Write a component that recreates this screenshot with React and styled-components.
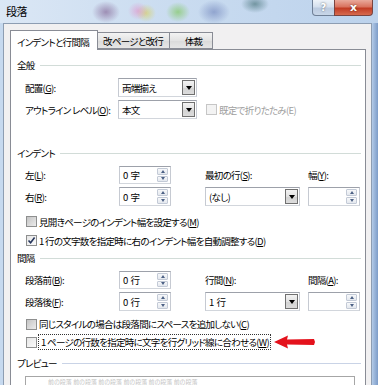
import React from 'react';
import styled, { createGlobalStyle } from 'styled-components';

const FONT = `"Noto Sans CJK JP", "Noto Sans", sans-serif`;

const Global = createGlobalStyle`
  html, body { margin: 0; padding: 0; }
  body { width: 378px; height: 385px; overflow: hidden; background: #c2d6ee; }
`;

const Window = styled.div`
  width: 378px;
  height: 385px;
  overflow: hidden;
  display: flex;
  flex-direction: column;
  background: linear-gradient(to right, #c6d9ef 0, #c6d9ef 371px, #a9c2e2 373px, #7d9cc8 378px);
  font-family: ${FONT};
  font-size: 9.5px;
  letter-spacing: -0.7px;
  font-feature-settings: "palt";
  color: #000;
`;

const TitleBar = styled.div`
  height: 23px;
  flex: none;
  display: flex;
  justify-content: space-between;
  align-items: flex-start;
  padding-left: 6px;
  box-sizing: border-box;
  background:
    radial-gradient(ellipse 14px 11px at 106px 12px, rgba(140,115,160,0.75), transparent),
    radial-gradient(ellipse 10px 9px at 138px 11px, rgba(225,150,205,0.65), transparent),
    radial-gradient(ellipse 10px 9px at 146px 13px, rgba(215,210,110,0.75), transparent),
    radial-gradient(ellipse 12px 10px at 178px 12px, rgba(130,200,100,0.7), transparent),
    radial-gradient(ellipse 16px 12px at 214px 12px, rgba(100,120,180,0.55), transparent),
    radial-gradient(ellipse 14px 9px at 255px 4px, rgba(60,105,110,0.6), transparent),
    linear-gradient(to right, #dbe7f5, #cadcf0 45%, #bcd2ec);
`;

const Title = styled.span`
  font-size: 11px;
  letter-spacing: -0.5px;
  line-height: 23px;
`;

const Captions = styled.div`
  display: flex;
  margin-right: 5px;
`;

const CapBtn = styled.div`
  width: ${p => p.$w}px;
  height: 16px;
  box-sizing: border-box;
  border: 1px solid ${p => (p.$close ? '#7a4440' : '#6f7f96')};
  border-top: none;
  border-radius: ${p => (p.$close ? '0 0 4px 0' : '0 0 0 4px')};
  margin-left: ${p => (p.$close ? '-1px' : '0')};
  display: flex;
  align-items: center;
  justify-content: center;
  font-family: "DejaVu Sans", sans-serif;
  font-weight: bold;
  letter-spacing: 0;
  font-size: ${p => (p.$close ? '11px' : '10px')};
  color: #fff;
  text-shadow: 0 0 2px rgba(0, 0, 0, 0.6);
  background: ${p =>
    p.$close
      ? 'linear-gradient(#e9a99b 0%, #d9735f 45%, #c23c24 55%, #d66a4f 100%)'
      : 'linear-gradient(#eef3f9 0%, #d5e0ee 45%, #bccbe0 55%, #c8d6e8 100%)'};
`;

const Client = styled.div`
  flex: 1;
  margin: 0 6px 0 3px;
  border: 1px solid #8d9db2;
  border-bottom: none;
  background: #f1f0f1;
  padding: 6px 0 0 6px;
  display: flex;
  flex-direction: column;
  min-height: 0;
`;

const Tabs = styled.div`
  display: flex;
  align-items: flex-end;
  height: 19px;
  flex: none;
`;

const Tab = styled.div`
  width: ${p => p.$w}px;
  box-sizing: border-box;
  height: ${p => (p.$active ? 20 : 17)}px;
  margin-bottom: ${p => (p.$active ? '-1px' : '0')};
  margin-left: ${p => (p.$first ? '0' : '-1px')};
  position: relative;
  z-index: ${p => (p.$active ? 2 : 1)};
  border: 1px solid #898c95;
  border-bottom: ${p => (p.$active ? 'none' : '1px solid #898c95')};
  background: ${p => (p.$active ? '#fff' : 'linear-gradient(#f3f3f3, #e3e3e3 50%, #dadada 51%, #e6e6e6)')};
  display: flex;
  align-items: center;
  justify-content: ${p => (p.$center ? 'center' : 'flex-start')};
  padding: ${p => (p.$active ? '2px 0 0 6px' : '1px 0 0 5px')};
  white-space: nowrap;
`;

const Panel = styled.div`
  width: 356px;
  box-sizing: border-box;
  flex: 1;
  background: #fff;
  border: 1px solid #898c95;
  padding: 9px 4px 0 6px;
  display: flex;
  flex-direction: column;
`;

const GroupHead = styled.div`
  display: flex;
  align-items: center;
  gap: 5px;
  height: 12px;
  margin-top: ${p => p.$mt || 0}px;
  white-space: nowrap;
`;

const GroupLine = styled.div`
  flex: 1;
  height: 1px;
  background: ${p => (p.$light ? '#c9d3e6' : '#d2dcd8')};
`;

const FieldGrid = styled.div`
  display: grid;
  grid-template-columns: ${p => p.$cols};
  grid-template-rows: ${p => p.$rows};
  row-gap: 3px;
  align-items: center;
  padding-left: 8px;
  margin-top: ${p => p.$mt || 0}px;
`;

const Label = styled.span`
  white-space: nowrap;
  color: ${p => (p.$disabled ? '#a0a0a0' : '#000')};
`;

const U = styled.span`
  text-decoration: underline;
`;

const Field = styled.div`
  width: ${p => p.$w}px;
  height: 100%;
  box-sizing: border-box;
  border: 1px solid #a3a7b0;
  border-color: #9da1aa #c6cad2 #d2d6dc #c6cad2;
  background: #fff;
  display: flex;
  align-items: stretch;
`;

const FieldText = styled.span`
  flex: 1;
  display: flex;
  align-items: center;
  padding-left: 3px;
  white-space: pre;
`;

const SpinCol = styled.div`
  width: 11px;
  margin: 1px 2px 1px 0;
  display: flex;
  flex-direction: column;
  gap: 1px;
`;

const SpinBtn = styled.div`
  flex: 1;
  border: 1px solid #c3cad6;
  border-radius: 1px;
  background: linear-gradient(#f7f8fa, #e4e8ee);
  display: flex;
  align-items: center;
  justify-content: center;
`;

const Tri = styled.span`
  width: 0;
  height: 0;
  border-left: ${p => p.$s}px solid transparent;
  border-right: ${p => p.$s}px solid transparent;
  ${p => (p.$up ? 'border-bottom' : 'border-top')}: ${p => p.$h}px solid ${p => p.$c};
`;

const DropBtn = styled.div`
  width: 13px;
  margin: 1px;
  box-sizing: border-box;
  border: 1px solid #707070;
  background: linear-gradient(#f3f3f3, #e2e2e2 50%, #d2d2d2 51%, #dcdcdc);
  display: flex;
  align-items: center;
  justify-content: center;
`;

const CheckRow = styled.div`
  display: flex;
  align-items: center;
  height: ${p => p.$h || 19}px;
  padding-left: ${p => (p.$inline ? 0 : 9)}px;
  margin-left: ${p => p.$ml || 0}px;
  margin-top: ${p => p.$mt || 0}px;
  white-space: nowrap;
`;

const Box = styled.span`
  width: 11px;
  height: 11px;
  box-sizing: border-box;
  flex: none;
  margin-right: 2px;
  border: 1px solid ${p => (p.$disabled ? '#c6c6c6' : '#8e8f8f')};
  background: ${p =>
    p.$disabled
      ? '#f3f3f3'
      : p.$light
      ? 'linear-gradient(135deg, #e6e6e6, #fbfbfb)'
      : 'linear-gradient(135deg, #c4c4c4, #ececec)'};
  display: flex;
  align-items: center;
  justify-content: center;
`;

const Focus = styled.span`
  outline: 1px dotted #333;
  outline-offset: 0;
  padding: 1px 1px 1px 2px;
  line-height: 12px;
`;

const Arrow = styled.svg`
  margin-left: 4px;
  flex: none;
`;

const Preview = styled.div`
  margin: 7px 6px 0 8px;
  flex: 1;
  border: 1px solid #a6a6a6;
  border-bottom: none;
  padding: 1px 0 0 22px;
  font-size: 6px;
  letter-spacing: 0;
  line-height: 7px;
  color: #c4c4c4;
  white-space: nowrap;
  overflow: hidden;
`;

const Spin = ({ value }) => (
  <Field $w={52}>
    <FieldText>{value}</FieldText>
    <SpinCol>
      <SpinBtn><Tri $up $s={2.5} $h={3} $c="#4d6185" /></SpinBtn>
      <SpinBtn><Tri $s={2.5} $h={3} $c="#4d6185" /></SpinBtn>
    </SpinCol>
  </Field>
);

const Select = ({ value, w }) => (
  <Field $w={w}>
    <FieldText>{value}</FieldText>
    <DropBtn><Tri $s={3} $h={4} $c="#000" /></DropBtn>
  </Field>
);

const Check = ({ checked, disabled, light }) => (
  <Box $disabled={disabled} $light={light}>
    {checked && (
      <svg width="9" height="9" viewBox="0 0 9 9">
        <path d="M1.5 4.5 L3.6 6.8 L7.6 1.6" fill="none" stroke="#26365c" strokeWidth="1.6" />
      </svg>
    )}
  </Box>
);

export default function App() {
  return (
    <>
      <Global />
      <Window>
        <TitleBar>
          <Title>段落</Title>
          <Captions>
            <CapBtn $w={23}>?</CapBtn>
            <CapBtn $w={39} $close>x</CapBtn>
          </Captions>
        </TitleBar>
        <Client>
          <Tabs>
            <Tab $active $first $w={88}>インデントと行間隔</Tab>
            <Tab $w={73}>改ページと改行</Tab>
            <Tab $w={44} $center>体裁</Tab>
          </Tabs>
          <Panel>
            <GroupHead>
              <Label>全般</Label>
              <GroupLine />
            </GroupHead>
            <FieldGrid $cols="93px 79px auto" $rows="19px 19px" $mt={7}>
              <Label>配置(<U>G</U>):</Label>
              <Select value="両端揃え" w={79} />
              <span />
              <Label>アウトライン レベル(<U>O</U>):</Label>
              <Select value="本文" w={79} />
              <CheckRow $inline $ml={9} $h={19}>
                <Check disabled />
                <Label $disabled>既定で折りたたみ(E)</Label>
              </CheckRow>
            </FieldGrid>

            <GroupHead $mt={28}>
              <Label>インデント</Label>
              <GroupLine />
            </GroupHead>
            <FieldGrid $cols="94px 86px 103px 52px" $rows="18px 19px" $mt={7}>
              <Label>左(<U>L</U>):</Label>
              <Spin value="0  字" />
              <Label>最初の行(<U>S</U>):</Label>
              <Label>幅(<U>Y</U>):</Label>
              <Label>右(<U>R</U>):</Label>
              <Spin value="0  字" />
              <Select value="(なし)" w={95} />
              <Spin value="" />
            </FieldGrid>
            <CheckRow $mt={6}>
              <Check />
              <Label>見開きページのインデント幅を設定する(<U>M</U>)</Label>
            </CheckRow>
            <CheckRow>
              <Check checked light />
              <Label>1 行の文字数を指定時に右のインデント幅を自動調整する(<U>D</U>)</Label>
            </CheckRow>

            <GroupHead $mt={2}>
              <Label>間隔</Label>
              <GroupLine />
            </GroupHead>
            <FieldGrid $cols="94px 86px 103px 52px" $rows="18px 19px" $mt={7}>
              <Label>段落前(<U>B</U>):</Label>
              <Spin value="0  行" />
              <Label>行間(<U>N</U>):</Label>
              <Label>間隔(<U>A</U>):</Label>
              <Label>段落後(<U>F</U>):</Label>
              <Spin value="0  行" />
              <Select value="1  行" w={95} />
              <Spin value="" />
            </FieldGrid>
            <CheckRow $mt={4} $h={18}>
              <Check />
              <Label>同じスタイルの場合は段落間にスペースを追加しない(<U>C</U>)</Label>
            </CheckRow>
            <CheckRow $h={18}>
              <Check light />
              <Focus>1 ページの行数を指定時に文字を行グリッド線に合わせる(<U>W</U>)</Focus>
              <Arrow width="42" height="14" viewBox="0 0 42 14">
                <path d="M0 7 L14 0.5 L13 4.5 L40 4 L41 7 L40 10 L13 9.5 L14 13.5 Z" fill="#e4121c" />
              </Arrow>
            </CheckRow>

            <GroupHead $mt={6}>
              <Label>プレビュー</Label>
              <GroupLine $light />
            </GroupHead>
            <Preview>前の段落 前の段落 前の段落 前の段落 前の段落 前の段落</Preview>
          </Panel>
        </Client>
      </Window>
    </>
  );
}
